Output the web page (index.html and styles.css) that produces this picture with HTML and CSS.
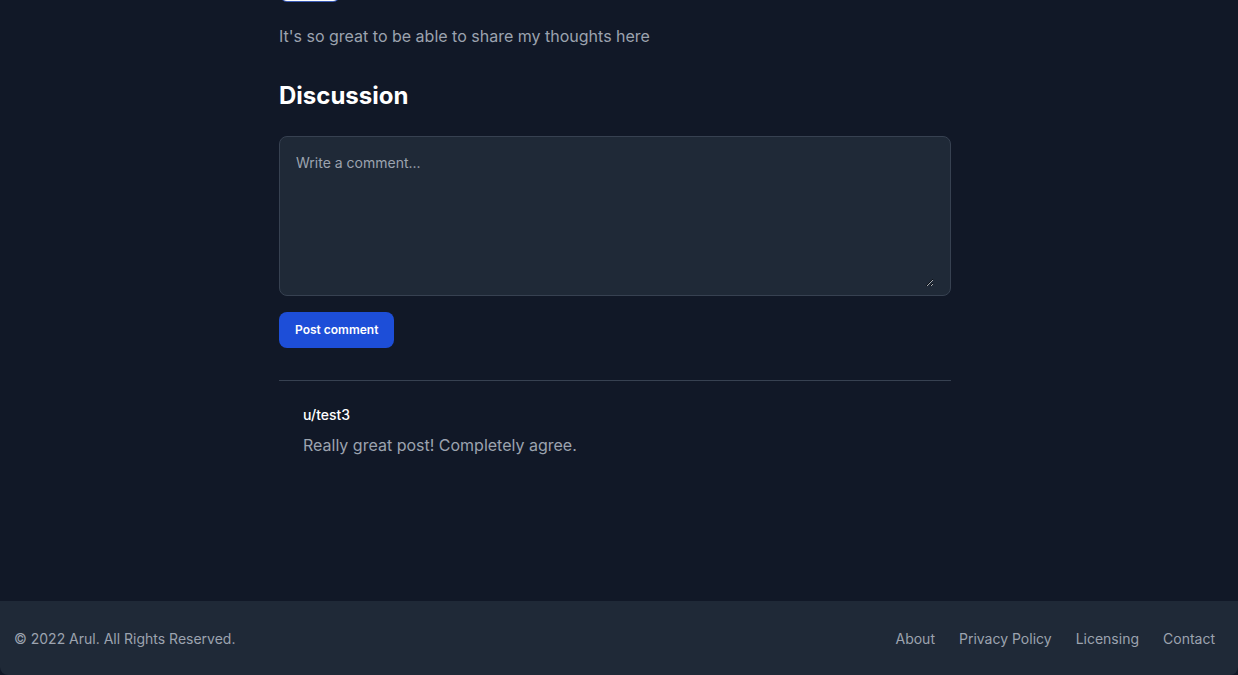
FILE: index.html
```html
<!DOCTYPE html>
<html lang="en">
<head>
<meta charset="utf-8">
<title>Post</title>
<link rel="stylesheet" href="styles.css">
</head>
<body>
<main class="main">
  <div class="container">
    <div class="top-chip"></div>
    <p class="post-body">It's so great to be able to share my thoughts here</p>
    <section class="discussion">
      <h2 class="discussion-title">Discussion</h2>
      <form class="comment-form">
        <div class="comment-box">
          <textarea class="comment-input" placeholder="Write a comment..."></textarea>
        </div>
        <button type="button" class="btn-post">Post comment</button>
      </form>
      <article class="comment">
        <div class="comment-author">u/test3</div>
        <p class="comment-text">Really great post! Completely agree.</p>
      </article>
    </section>
  </div>
</main>
<footer class="footer">
  <span class="copyright">© 2022 Arul. All Rights Reserved.</span>
  <ul class="footer-links">
    <li><a href="#">About</a></li>
    <li><a href="#">Privacy Policy</a></li>
    <li><a href="#">Licensing</a></li>
    <li><a href="#">Contact</a></li>
  </ul>
</footer>
</body>
</html>
```

FILE: styles.css
```css
* { box-sizing: border-box; }
html, body { margin: 0; padding: 0; }
body {
  background: #111827;
  font-family: Inter, "Liberation Sans", sans-serif;
  color: #9ca3af;
  min-height: 100vh;
  display: flex;
  flex-direction: column;
  overflow: hidden;
}
.main { flex: 1; }
.container {
  width: 680px;
  margin: 0 auto;
  padding-right: 8px;
}
.top-chip {
  width: 58px;
  height: 20px;
  margin: -19px 0 0 2px;
  background: #ffffff;
  border-radius: 6px;
  box-shadow: 0 0 0 1px #3b5bb5;
}
.post-body {
  margin: 23px 0 0;
  font-size: 16px;
  line-height: 24px;
  color: #9ca3af;
}
.discussion-title {
  margin: 32px 0 24px;
  font-size: 24px;
  line-height: 32px;
  font-weight: 700;
  color: #ffffff;
}
.comment-box {
  background: #1f2937;
  border: 1px solid #374151;
  border-radius: 8px;
  padding: 8px 16px;
  margin-bottom: 16px;
}
.comment-input {
  display: block;
  width: 100%;
  height: 142px;
  padding: 8px 0;
  border: 0;
  outline: none;
  background: transparent;
  color: #ffffff;
  font-family: Inter, "Liberation Sans", sans-serif;
  font-size: 14px;
  line-height: 20px;
  resize: vertical;
  color-scheme: dark;
}
.comment-input::placeholder { color: #9ca3af; }
.btn-post {
  display: inline-flex;
  align-items: center;
  padding: 10px 16px;
  border: 0;
  border-radius: 8px;
  background: #1d4ed8;
  color: #ffffff;
  font-family: Inter, "Liberation Sans", sans-serif;
  font-size: 12px;
  line-height: 16px;
  font-weight: 600;
  cursor: pointer;
}
.comment {
  margin-top: 32px;
  border-top: 1px solid #374151;
  padding: 24px 24px;
}
.comment-author {
  font-size: 14px;
  line-height: 20px;
  font-weight: 500;
  color: #ffffff;
  margin-bottom: 8px;
}
.comment-text {
  margin: 0;
  font-size: 16px;
  line-height: 24px;
  color: #9ca3af;
}
.footer {
  background: #1f2937;
  height: 74px;
  padding: 0 23px 0 14px;
  display: flex;
  align-items: center;
  justify-content: space-between;
  border-radius: 0 0 8px 8px;
  font-size: 14px;
  line-height: 20px;
}
.copyright { color: #9ca3af; padding-top: 2px; }
.footer-links {
  list-style: none;
  margin: 0;
  padding: 2px 0 0;
  display: flex;
  gap: 24px;
}
.footer-links a {
  color: #9ca3af;
  text-decoration: none;
}
```
